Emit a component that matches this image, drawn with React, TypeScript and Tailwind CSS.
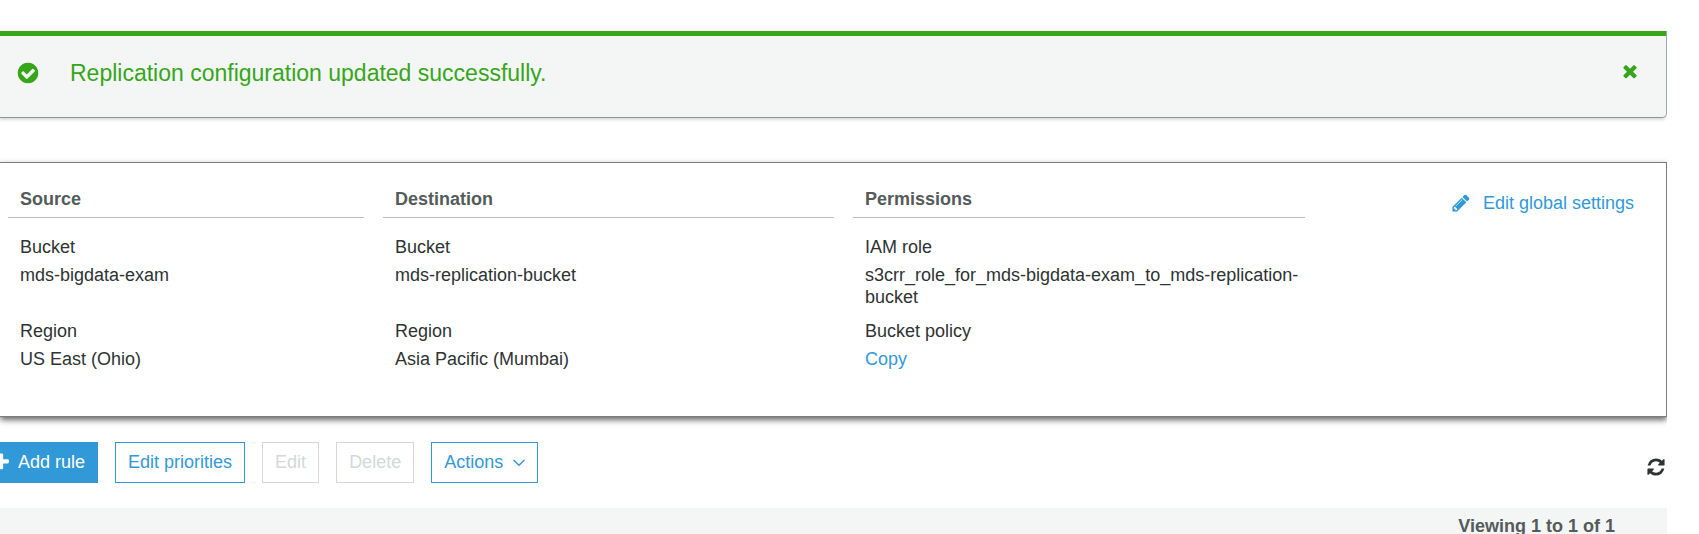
import React from "react";

const ICONS = {
  check:
    "M1412 734q0-28-18-46l-91-90q-19-19-45-19t-45 19l-408 407-226-226q-19-19-45-19t-45 19l-91 90q-18 18-18 46 0 27 18 45l362 362q19 19 45 19 27 0 46-19l543-543q18-18 18-45zm252 162q0 209-103 385.5t-279.5 279.5-385.5 103-385.5-103-279.5-279.5-103-385.5 103-385.5 279.5-279.5 385.5-103 385.5 103 279.5 279.5 103 385.5z",
  times:
    "M1490 1322q0 40-28 68l-136 136q-28 28-68 28t-68-28l-294-294-294 294q-28 28-68 28t-68-28l-136-136q-28-28-28-68t28-68l294-294-294-294q-28-28-28-68t28-68l136-136q28-28 68-28t68 28l294 294 294-294q28-28 68-28t68 28l136 136q28 28 28 68t-28 68l-294 294 294 294q28 28 28 68z",
  plus: "M1600 736v192q0 40-28 68t-68 28h-416v416q0 40-28 68t-68 28h-192q-40 0-68-28t-28-68v-416h-416q-40 0-68-28t-28-68v-192q0-40 28-68t68-28h416v-416q0-40 28-68t68-28h192q40 0 68 28t28 68v416h416q40 0 68 28t28 68z",
  pencil:
    "M491 1536l91-91-235-235-91 91v107h128v128h107zm523-928q0-22-22-22-10 0-17 7l-542 542q-7 7-7 17 0 22 22 22 10 0 17-7l542-542q7-7 7-17zm-54-192l416 416-832 832h-416v-416zm683 96q0 53-37 90l-166 166-416-416 166-165q36-38 90-38 53 0 91 38l235 234q37 39 37 91z",
  refresh:
    "M1639 1056q0 5-1 7-64 268-268 434.5t-478 166.5q-146 0-282.5-55t-243.5-157l-129 129q-19 19-45 19t-45-19-19-45v-448q0-26 19-45t45-19h448q26 0 45 19t19 45-19 45l-137 137q71 66 161 102t187 36q134 0 250-65t186-179q11-17 53-117 8-23 30-23h192q13 0 22.5 9.5t9.5 22.5zm25-800v448q0 26-19 45t-45 19h-448q-26 0-45-19t-19-45 19-45l138-138q-148-137-349-137-134 0-250 65t-186 179q-11 17-53 117-8 23-30 23h-199q-13 0-22.5-9.5t-9.5-22.5v-7q65-268 270-434.5t480-166.5q146 0 284 55.5t245 156.5l130-129q19-19 45-19t45 19 19 45z",
};

function Icon({ name, className }: { name: keyof typeof ICONS; className: string }) {
  return (
    <svg viewBox="0 0 1792 1792" fill="currentColor" aria-hidden="true" className={`shrink-0 ${className}`}>
      <path d={ICONS[name]} />
    </svg>
  );
}

function Column({ title, children }: { title: string; children: React.ReactNode }) {
  return (
    <section className="min-w-0">
      <h2 className="border-b border-[#b9bdbd] pb-[7px] pl-3 font-bold text-[#545b5b]">{title}</h2>
      <dl className="flex flex-col gap-3 pt-[18px] pl-3">{children}</dl>
    </section>
  );
}

function Field({ label, children }: { label: string; children: React.ReactNode }) {
  return (
    <div className="flex flex-col gap-[6px]">
      <dt>{label}</dt>
      <dd className="min-h-[22px]">{children}</dd>
    </div>
  );
}

function ToolButton({
  children,
  variant = "outline",
  disabled = false,
}: {
  children: React.ReactNode;
  variant?: "outline" | "primary";
  disabled?: boolean;
}) {
  const tone = disabled
    ? "border-[#d5d8d8] text-[#d5d8d8]"
    : variant === "primary"
      ? "border-[#3199d8] bg-[#3199d8] text-white"
      : "border-[#3199d8] text-[#3199d8]";
  return (
    <button
      type="button"
      disabled={disabled}
      className={`flex h-[41px] shrink-0 items-center border px-3 pb-[2px] whitespace-nowrap ${tone}`}
    >
      {children}
    </button>
  );
}

export default function App() {
  return (
    <div className="flex h-screen flex-col overflow-hidden bg-white pt-[31px] pr-8 font-['Liberation_Sans',Arial,sans-serif] text-[18px] leading-[22px] text-[#2e3333]">
      <div
        role="status"
        className="flex shrink-0 items-start rounded-br-[5px] border-r border-b border-r-[#a2a6a6] border-b-[#8f9494] bg-[#f4f6f6] text-[#36a61a] shadow-[0_2px_3px_rgba(0,0,0,0.15)] [clip-path:inset(0_0_-8px_0)]"
      >
        <div className="flex grow items-start border-t-[5px] border-[#36a61a] pt-[23px] pr-[26px] pb-[30px] pl-4">
          <Icon name="check" className="mt-[2px] size-6" />
          <p className="grow pl-[30px] text-[23px] leading-7">Replication configuration updated successfully.</p>
          <button type="button" aria-label="Dismiss" className="pt-[2px]">
            <Icon name="times" className="size-5" />
          </button>
        </div>
      </div>

      <div className="mt-11 grid shrink-0 grid-cols-[356fr_451fr_452fr_314fr] gap-x-[19px] border-y border-r border-[#7b7d7d] pt-[25px] pr-7 pb-[46px] pl-2 shadow-[0_3px_6px_rgba(0,0,0,0.6)] [clip-path:inset(-4px_0_-12px_0)]">
        <Column title="Source">
          <Field label="Bucket">
            <div className="min-h-11">mds-bigdata-exam</div>
          </Field>
          <Field label="Region">US East (Ohio)</Field>
        </Column>
        <Column title="Destination">
          <Field label="Bucket">
            <div className="min-h-11">mds-replication-bucket</div>
          </Field>
          <Field label="Region">Asia Pacific (Mumbai)</Field>
        </Column>
        <Column title="Permissions">
          <Field label="IAM role">
            <div className="min-h-11">s3crr_role_for_mds-bigdata-exam_to_mds-replication-bucket</div>
          </Field>
          <Field label="Bucket policy">
            <a href="#copy" className="text-[#3199d8]">
              Copy
            </a>
          </Field>
        </Column>
        <div className="flex items-start justify-end pt-1 pr-1">
          <a href="#settings" className="flex items-center gap-3 whitespace-nowrap text-[#3199d8]">
            <Icon name="pencil" className="size-5" />
            Edit global settings
          </a>
        </div>
      </div>

      <div className="-ml-[22px] mt-[25px] flex shrink-0 items-center gap-[17px] pr-px">
        <ToolButton variant="primary">
          <Icon name="plus" className="mr-[7px] size-5" />
          Add rule
        </ToolButton>
        <ToolButton>Edit priorities</ToolButton>
        <ToolButton disabled>Edit</ToolButton>
        <ToolButton disabled>Delete</ToolButton>
        <ToolButton>
          Actions
          <svg viewBox="0 0 12 8" className="mt-[2px] ml-[10px] h-2 w-3" fill="none" stroke="currentColor" strokeWidth="1.5" aria-hidden="true">
            <path d="M.6 1 6 6.2 11.4 1" />
          </svg>
        </ToolButton>
        <button type="button" aria-label="Refresh" className="mt-2 ml-auto">
          <Icon name="refresh" className="size-5" />
        </button>
      </div>

      <div className="mt-[25px] flex grow justify-end bg-[#f4f6f6] pt-[7px] pr-[52px] font-bold text-[#545b5b]">
        <span>Viewing 1 to 1 of 1</span>
      </div>
    </div>
  );
}
